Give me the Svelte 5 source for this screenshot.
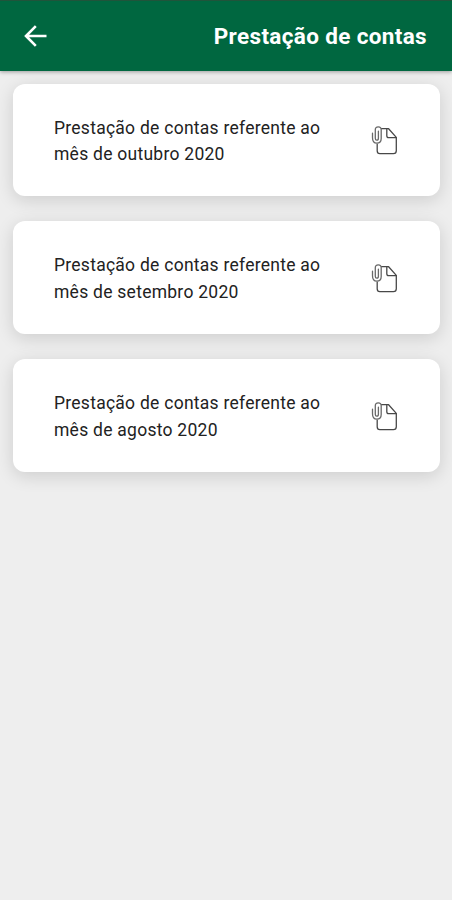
<script>
  const reports = ['outubro 2020', 'setembro 2020', 'agosto 2020'];
</script>

<div class="screen">
  <header>
    <button aria-label="Voltar">
      <svg width="24" height="24" viewBox="0 0 24 24" fill="none" stroke="#fff" stroke-width="2.6">
        <path d="M23.5 12H3.5M12.8 2.2L3 12l9.8 9.8" />
      </svg>
    </button>
    <h1>Prestação de contas</h1>
  </header>
  <main>
    {#each reports as month}
      <article>
        <p><span>Prestação de contas referente ao</span><br /><span>mês de {month}</span></p>
        <svg class="doc" width="28" height="30" viewBox="0 0 28 30" fill="none" stroke="#484848" stroke-width="1.3" stroke-linejoin="round" stroke-linecap="round">
          <path d="M10.5 2.7H17.6L25.3 11.4V24.7Q25.3 27.6 22.4 27.6H8.8Q6.2 27.6 6.2 24.7V18.1" />
          <path d="M15.8 2.8V9.7Q15.8 11.6 17.7 11.6H25.2" />
          <path stroke="#686868" d="M1.5 7.2V11.8Q1.5 17.2 5.8 17.2Q10.2 17.2 10.2 12.5V3.8Q10.2 .9 7.3 .9Q4.3 .9 4.3 3.8V12.2Q4.3 14.2 5.8 14.2Q7.4 14.2 7.4 12.2V5.2" />
        </svg>
      </article>
    {/each}
  </main>
</div>

<style>
  :global(body) {
    margin: 0;
    background: #eee;
  }
  .screen {
    height: 900px;
    overflow: hidden;
    background: #eee;
    font-family: Roboto, sans-serif;
  }
  header {
    box-sizing: border-box;
    height: 70.5px;
    display: flex;
    align-items: center;
    justify-content: space-between;
    padding: 0 25px 0 23px;
    background: #006740;
    border-top: 1.5px solid #20543b;
    box-shadow: 0 1px 4px rgba(0, 0, 0, 0.35);
  }
  button {
    display: flex;
    padding: 0;
    border: 0;
    background: none;
  }
  h1 {
    margin: 0;
    color: #fff;
    font-size: 22.5px;
    line-height: 28px;
    font-weight: 700;
    letter-spacing: 0.35px;
    white-space: nowrap;
  }
  main {
    display: flex;
    flex-direction: column;
    gap: 25.2px;
    padding: 13.3px 12px 0 13px;
  }
  article {
    box-sizing: border-box;
    height: 112.5px;
    display: flex;
    align-items: center;
    justify-content: space-between;
    padding: 2.5px 41px 0;
    border-radius: 12px;
    background: #fff;
    box-shadow: 0 4px 18px rgba(0, 0, 0, 0.14);
  }
  p {
    margin: 0;
    color: #222;
    font-size: 17.5px;
    line-height: 26.8px;
    letter-spacing: 0.26px;
    white-space: nowrap;
  }
  .doc {
    flex: none;
  }
</style>
